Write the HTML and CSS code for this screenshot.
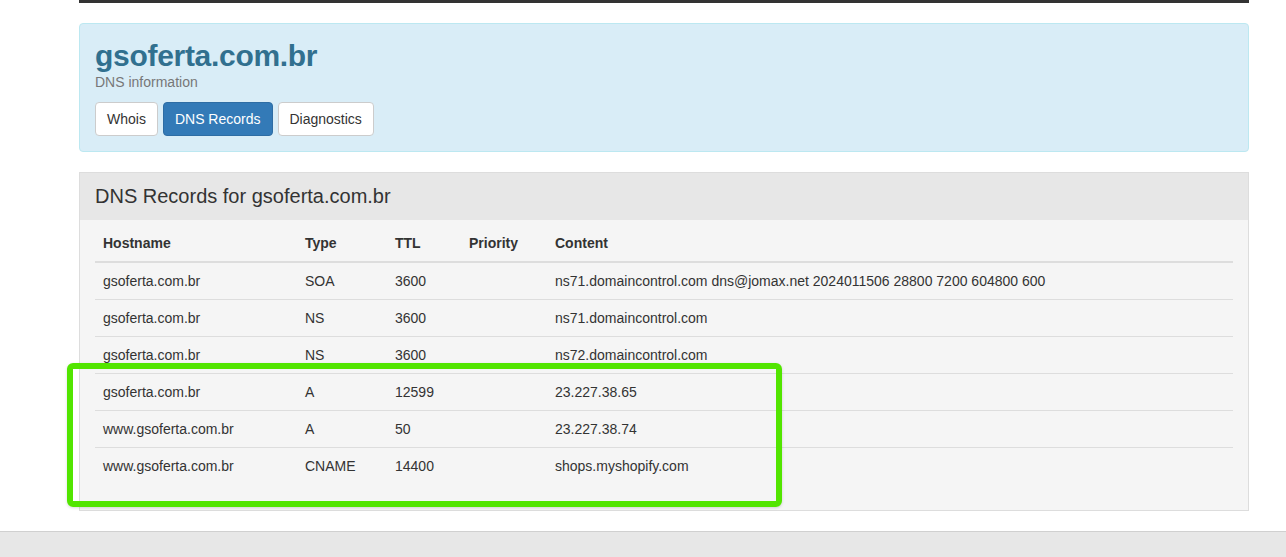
FILE: index.html
```html
<!DOCTYPE html>
<html lang="en">

<head>
    <meta charset="UTF-8">
    <meta name="viewport" content="width=device-width, initial-scale=1">
    <title>gsoferta.com.br - DNS information</title>
    <link rel="stylesheet" href="styles.css">
</head>

<body>
    <div class="topo"></div>
    <div class="conteudo">
        <div class="caixa-info">
            <h1 class="dominio">gsoferta.com.br</h1>
            <p class="subtitulo">DNS information</p>
            <div class="botoes">
                <a class="botao">Whois</a>
                <a class="botao botao-ativo">DNS Records</a>
                <a class="botao">Diagnostics</a>
            </div>
        </div>

        <div class="painel">
            <div class="painel-titulo">DNS Records for gsoferta.com.br</div>
            <div class="painel-corpo">
                <table class="tabela">
                    <thead>
                        <tr>
                            <th class="col-host">Hostname</th>
                            <th class="col-tipo">Type</th>
                            <th class="col-ttl">TTL</th>
                            <th class="col-prio">Priority</th>
                            <th>Content</th>
                        </tr>
                    </thead>
                    <tbody>
                        <tr>
                            <td>gsoferta.com.br</td>
                            <td>SOA</td>
                            <td>3600</td>
                            <td></td>
                            <td>ns71.domaincontrol.com dns@jomax.net 2024011506 28800 7200 604800 600</td>
                        </tr>
                        <tr>
                            <td>gsoferta.com.br</td>
                            <td>NS</td>
                            <td>3600</td>
                            <td></td>
                            <td>ns71.domaincontrol.com</td>
                        </tr>
                        <tr>
                            <td>gsoferta.com.br</td>
                            <td>NS</td>
                            <td>3600</td>
                            <td></td>
                            <td>ns72.domaincontrol.com</td>
                        </tr>
                        <tr>
                            <td>gsoferta.com.br</td>
                            <td>A</td>
                            <td>12599</td>
                            <td></td>
                            <td>23.227.38.65</td>
                        </tr>
                        <tr>
                            <td>www.gsoferta.com.br</td>
                            <td>A</td>
                            <td>50</td>
                            <td></td>
                            <td>23.227.38.74</td>
                        </tr>
                        <tr>
                            <td>www.gsoferta.com.br</td>
                            <td>CNAME</td>
                            <td>14400</td>
                            <td></td>
                            <td>shops.myshopify.com</td>
                        </tr>
                    </tbody>
                </table>
            </div>
        </div>
    </div>
    <div class="rodape"></div>

    <!-- marcacao verde por cima das linhas A / CNAME -->
    <div class="destaque"></div>
</body>

</html>
```

FILE: styles.css
```css
* {
    margin: 0;
    padding: 0;
    box-sizing: border-box;
}

body {
    font-family: "Liberation Sans", Arial, sans-serif;
    font-size: 14px;
    line-height: 20px;
    color: #333;
    background-color: #fff;
}

.topo {
    width: 1170px;
    height: 3px;
    margin-left: 79px;
    background-color: #333;
}

.conteudo {
    width: 1170px;
    margin-left: 79px;
}

.caixa-info {
    margin-top: 20px;
    padding: 15px;
    background-color: #d9edf7;
    border: 1px solid #bce8f1;
    border-radius: 4px;
}

.dominio {
    font-size: 30px;
    line-height: 33px;
    font-weight: bold;
    color: #31708f;
    letter-spacing: -0.3px;
}

.subtitulo {
    color: #777;
    font-size: 14px;
    line-height: 20px;
}

.botoes {
    display: flex;
    gap: 5px;
    margin-top: 10px;
}

.botao {
    display: inline-block;
    padding: 6px 11px;
    font-size: 14px;
    line-height: 20px;
    color: #333;
    background-color: #fff;
    border: 1px solid #ccc;
    border-radius: 4px;
    cursor: pointer;
}

.botao-ativo {
    color: #fff;
    background-color: #337ab7;
    border-color: #2e6da4;
}

.painel {
    margin-top: 20px;
    border: 1px solid #ddd;
    background-color: #f5f5f5;
}

.painel-titulo {
    padding: 10px 15px 11px 15px;
    line-height: 26px;
    font-size: 20px;
    color: #333;
    background-color: #e7e7e7;
}

.painel-corpo {
    padding: 5px 15px 16px 15px;
}

.tabela {
    width: 100%;
    border-collapse: collapse;
    margin-bottom: 10px;
}

.tabela th,
.tabela td {
    padding: 8px;
    text-align: left;
    vertical-align: top;
    line-height: 20px;
}

.tabela th {
    font-weight: bold;
    border-bottom: 2px solid #ddd;
}

.tabela td {
    border-top: 1px solid #ddd;
}

.col-host {
    width: 202px;
}

.col-tipo {
    width: 90px;
}

.col-ttl {
    width: 74px;
}

.col-prio {
    width: 86px;
}

.rodape {
    margin-top: 20px;
    height: 40px;
    background-color: #e7e7e7;
    border-top: 1px solid #d0d0d0;
}

.destaque {
    position: absolute;
    left: 67px;
    top: 363px;
    width: 715px;
    height: 144px;
    border: 6px solid #52e500;
    border-radius: 6px;
    box-shadow: 0 1px 3px rgba(0, 0, 0, 0.15);
}
```
